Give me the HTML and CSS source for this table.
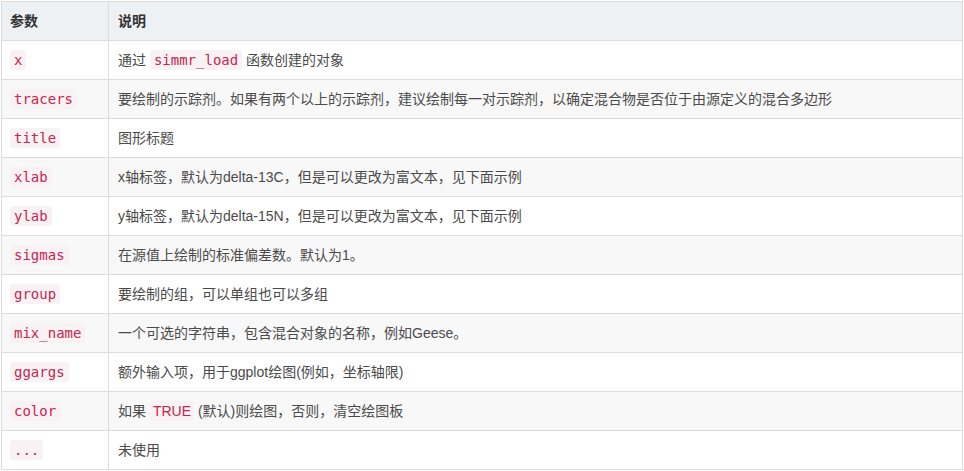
FILE: index.html
```html
<!DOCTYPE html>
<html lang="zh">
<head>
<meta charset="utf-8">
<link rel="stylesheet" href="styles.css">
</head>
<body>
<table class="params">
  <thead>
    <tr><th class="c1">参数</th><th>说明</th></tr>
  </thead>
  <tbody>
    <tr><td><code>x</code></td><td>通过 <code>simmr_load</code> 函数创建的对象</td></tr>
    <tr><td><code>tracers</code></td><td>要绘制的示踪剂。如果有两个以上的示踪剂，建议绘制每一对示踪剂，以确定混合物是否位于由源定义的混合多边形</td></tr>
    <tr><td><code>title</code></td><td>图形标题</td></tr>
    <tr><td><code>xlab</code></td><td>x轴标签，默认为delta-13C，但是可以更改为富文本，见下面示例</td></tr>
    <tr><td><code>ylab</code></td><td>y轴标签，默认为delta-15N，但是可以更改为富文本，见下面示例</td></tr>
    <tr><td><code>sigmas</code></td><td>在源值上绘制的标准偏差数。默认为1。</td></tr>
    <tr><td><code>group</code></td><td>要绘制的组，可以单组也可以多组</td></tr>
    <tr><td><code>mix_name</code></td><td>一个可选的字符串，包含混合对象的名称，例如Geese。</td></tr>
    <tr><td><code>ggargs</code></td><td>额外输入项，用于ggplot绘图(例如，坐标轴限)</td></tr>
    <tr><td><code>color</code></td><td>如果 <code class="plain">TRUE</code> (默认)则绘图，否则，清空绘图板</td></tr>
    <tr><td><code>...</code></td><td>未使用</td></tr>
  </tbody>
</table>
</body>
</html>
```

FILE: styles.css
```css
html, body {
  margin: 0;
  padding: 0;
  background: #fff;
}
body {
  padding: 1px 0 0 1px;
  font-family: "Liberation Sans", "Noto Sans CJK SC", sans-serif;
  font-size: 14px;
  color: #4a4a4a;
}
.params {
  border-collapse: collapse;
  width: 962px;
}
.params th,
.params td {
  border: 1px solid #dcdcdc;
  text-align: left;
  vertical-align: middle;
  padding: 0 9px;
  height: 38px;
  line-height: 20px;
}
.params th {
  background: #eef1f4;
  font-weight: bold;
  color: #333;
}
.params .c1 {
  width: 89px;
  padding-left: 8px;
}
.params td:first-child {
  padding-left: 8px;
}
.params tbody tr:nth-child(even) td {
  background: #f8f8f8;
}
code {
  font-family: "DejaVu Sans Mono", monospace;
  font-size: 14px;
  color: #c7254e;
  background: #f9f2f4;
  border-radius: 3px;
  padding: 2px 4px;
}
code.plain {
  font-family: "Liberation Sans", "Noto Sans CJK SC", sans-serif;
  padding: 2px 3px;
}
```
